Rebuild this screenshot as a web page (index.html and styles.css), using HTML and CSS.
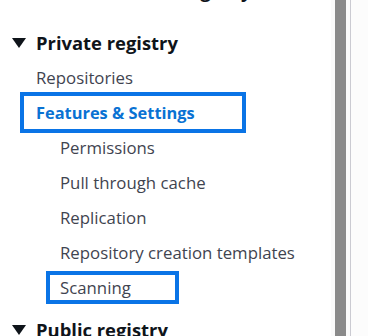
FILE: index.html
```html
<!DOCTYPE html>
<html>
<head>
<meta charset="utf-8">
<link rel="stylesheet" href="styles.css">
</head>
<body>
<div class="page">
  <nav class="nav">
    <div class="cut"><span class="cut-text">Container Registry</span></div>
    <div class="section">
      <svg class="caret" width="14" height="10" viewBox="0 0 14 10"><polygon points="0,0 14,0 7,10" fill="#0f141a"/></svg>
      <span>Private registry</span>
    </div>
    <ul class="list">
      <li class="item"><span class="link">Repositories</span></li>
      <li class="item"><span class="link active boxed-a">Features &amp; Settings</span></li>
      <li class="item sub"><span class="link">Permissions</span></li>
      <li class="item sub"><span class="link">Pull through cache</span></li>
      <li class="item sub"><span class="link">Replication</span></li>
      <li class="item sub"><span class="link">Repository creation templates</span></li>
      <li class="item sub"><span class="link boxed-b">Scanning</span></li>
    </ul>
    <div class="section section-b">
      <svg class="caret" width="14" height="10" viewBox="0 0 14 10"><polygon points="0,0 14,0 7,10" fill="#0f141a"/></svg>
      <span>Public registry</span>
    </div>
  </nav>
  <div class="track"><div class="thumb"></div></div>
  <div class="divider"></div>
  <div class="panel"></div>
</div>
</body>
</html>
```

FILE: styles.css
```css
html, body {
  margin: 0;
  padding: 0;
  background: #ffffff;
}
.page {
  display: flex;
  width: 368px;
  height: 336px;
  overflow: hidden;
  font-family: "Open Sans", "Noto Sans", sans-serif;
}
.nav {
  width: 331px;
  flex: none;
  background: #ffffff;
}
.cut {
  height: 4px;
  overflow: hidden;
  padding-left: 84px;
}
.cut-text {
  display: block;
  margin-top: -21px;
  font-size: 18px;
  font-weight: 700;
  line-height: 24px;
  color: #0f141a;
  white-space: nowrap;
}
.section {
  display: flex;
  align-items: center;
  height: 35px;
  padding-left: 12px;
  font-size: 18.4px;
  font-weight: 700;
  color: #0f141a;
  gap: 10px;
  margin-top: 21px;
}
.section-b {
  margin-top: 7px;
}
.caret {
  flex: none;
}
.list {
  list-style: none;
  margin: 0;
  padding: 0;
}
.item {
  height: 35px;
  display: flex;
  align-items: center;
  padding-left: 36px;
  font-size: 16.8px;
  color: #3f4450;
}
.item.sub {
  padding-left: 60px;
}
.link {
  position: relative;
  white-space: nowrap;
}
.active {
  color: #0972d3;
  font-weight: 700;
  font-size: 16.4px;
}
.boxed-a::after {
  content: "";
  position: absolute;
  left: -16px;
  top: -9px;
  width: 218px;
  height: 33px;
  border: 4px solid #0a74e6;
}
.boxed-b::after {
  content: "";
  position: absolute;
  left: -14px;
  top: -5px;
  width: 125px;
  height: 25px;
  border: 4px solid #0a74e6;
}
.track {
  width: 19px;
  flex: none;
  background: #fafafa;
  display: flex;
  padding-left: 4px;
  box-sizing: border-box;
}
.thumb {
  width: 11px;
  background: #8a8a8a;
}
.divider {
  width: 1px;
  flex: none;
  background: #cbcbd2;
}
.panel {
  flex: 1;
  background: #fcfcfc;
}
```
